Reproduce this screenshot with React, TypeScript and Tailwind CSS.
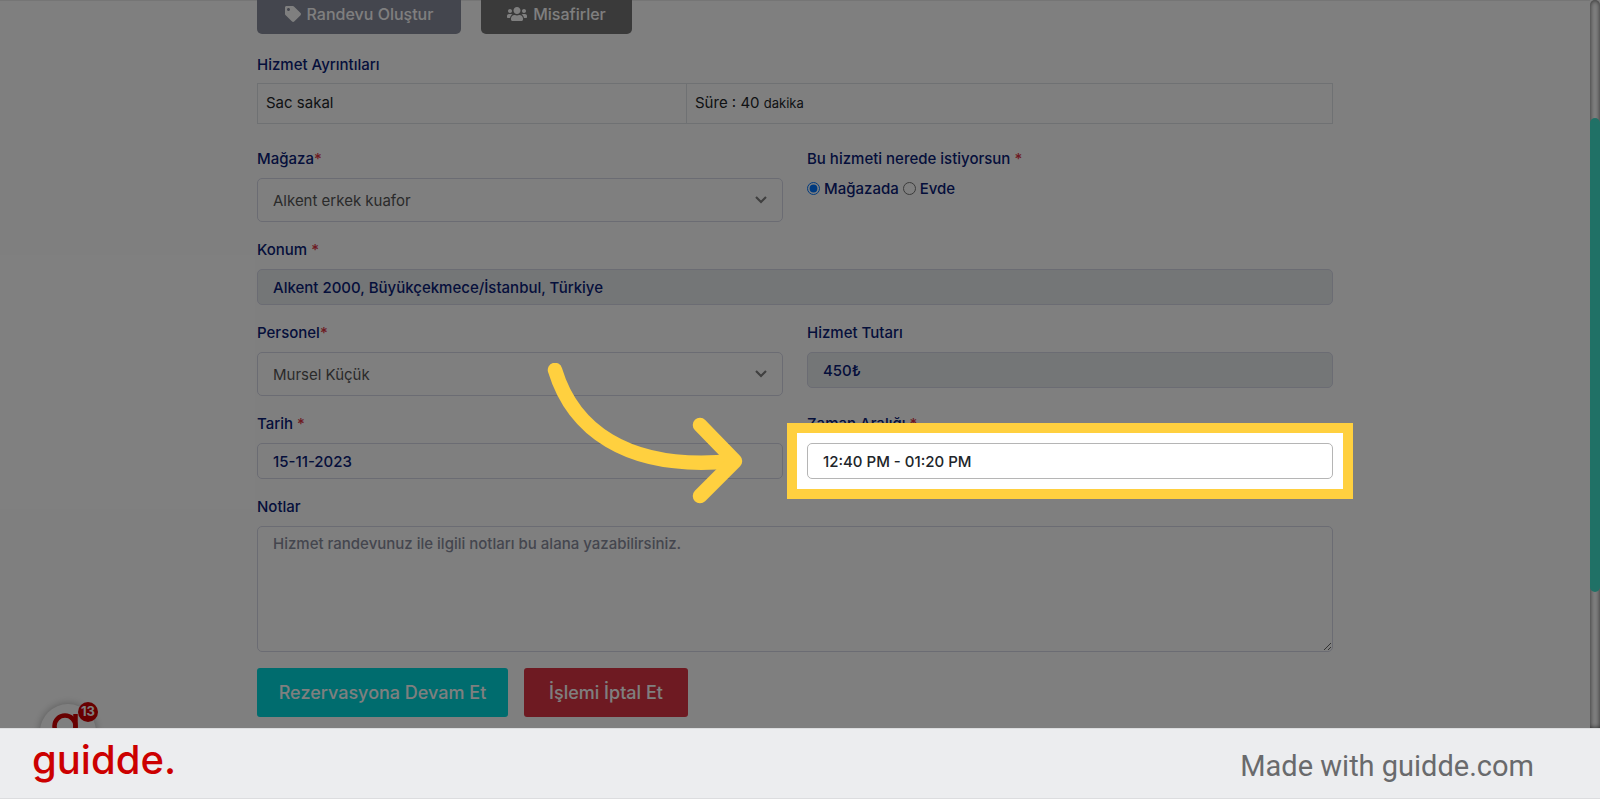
import type { ReactNode } from 'react';
import { FaTag, FaUsers } from 'react-icons/fa';

interface FieldProps {
  id: string;
  label: string;
  required?: boolean;
  children: ReactNode;
}

interface SelectProps {
  id: string;
  options: string[];
}

const inputClass =
  'block h-9 w-full rounded-[5px] border border-[#d6d8e7] px-[15px] text-[15px] font-medium text-[#0a2177] outline-none';

const Required = () => <span className="text-[#dc3545]">*</span>;

const ChevronIcon = () => (
  <svg
    className="pointer-events-none absolute top-1/2 right-4 h-2 w-3 -translate-y-1/2"
    viewBox="0 0 12 8"
    fill="none"
    stroke="#808080"
    strokeWidth={2.2}
  >
    <path d="M1 1l5 5 5-5" />
  </svg>
);

const PointerArrow = () => (
  <svg
    className="pointer-events-none absolute -top-20 right-full mr-16 h-[142px] w-[196px]"
    viewBox="0 0 196 142"
    fill="none"
    stroke="#ffd03f"
    strokeWidth={14.5}
    strokeLinecap="round"
    strokeLinejoin="round"
  >
    <path d="M8 7C25 63 76 109 186 98" />
    <path d="M153 62l35 36-35 35" />
  </svg>
);

/** Label with its control underneath */
function Field({ id, label, required, children }: FieldProps) {
  return (
    <div>
      <label htmlFor={id} className="mb-[9px] block text-[15px] leading-[21px] font-medium text-[#0a2177]">
        {label}
        {required && <Required />}
      </label>
      {children}
    </div>
  );
}

function Select({ id, options }: SelectProps) {
  return (
    <div className="relative">
      <select
        id={id}
        className="block h-11 w-full appearance-none rounded-[5px] border border-[#d6d8e7] bg-white px-[15px] pt-0.5 text-[15px] text-[#555555] outline-none"
      >
        {options.map((option) => (
          <option key={option}>{option}</option>
        ))}
      </select>
      <ChevronIcon />
    </div>
  );
}

function GuideWidget() {
  return (
    <div className="absolute -bottom-8 left-10 size-14 rounded-full bg-white shadow-[0_0_8px_rgba(0,0,0,0.3)]">
      <svg className="absolute top-2 left-3 h-10 w-7" viewBox="0 0 28 40" fill="none" stroke="#d00000" strokeWidth={4.5}>
        <circle cx="13" cy="14" r="10.5" />
        <line x1="23.5" y1="2" x2="23.5" y2="28" />
      </svg>
      <span className="absolute -top-0.5 -right-0.5 flex size-5 items-center justify-center rounded-full bg-[#d00000] text-[13px] font-bold text-white">
        13
      </span>
    </div>
  );
}

export default function App() {
  return (
    <div className="flex h-screen flex-col bg-white font-['Inter',sans-serif]">
      <div className="relative flex min-h-0 flex-1 overflow-hidden">
        <main className="min-w-0 flex-1 border-t border-[#ebebeb]">
          <form className="mx-auto w-full max-w-[1076px]">
            <div className="-mt-[7px] flex gap-5">
              <button
                type="button"
                className="flex h-10 w-51 items-center justify-center gap-1.5 rounded-[5px] bg-[#888c9c] text-base font-medium text-white"
              >
                <FaTag className="size-4" />
                Randevu Oluştur
              </button>
              <button
                type="button"
                className="flex h-10 w-[151px] items-center justify-center gap-1.5 rounded-[5px] bg-[#757575] text-base font-medium text-white"
              >
                <FaUsers className="size-5" />
                Misafirler
              </button>
            </div>

            <h2 className="mt-5 mb-2 text-[15px] leading-[21px] font-medium text-[#0a2177]">Hizmet Ayrıntıları</h2>
            <table className="w-full table-fixed border-collapse text-[15px] text-[#212529]">
              <tbody>
                <tr className="h-10">
                  <td className="w-[429px] border border-[#dee2e6] px-2">Sac sakal</td>
                  <td className="border border-[#dee2e6] px-2">
                    Süre : 40 <span className="text-[13px]">dakika</span>
                  </td>
                </tr>
              </tbody>
            </table>

            <div className="mt-6 grid grid-cols-2 gap-x-6 gap-y-[17px]">
              <Field id="store" label="Mağaza" required>
                <Select id="store" options={['Alkent erkek kuafor']} />
              </Field>

              <fieldset className="text-[15px] font-medium text-[#0a2177]">
                <legend className="mb-[9px] leading-[21px]">
                  Bu hizmeti nerede istiyorsun <Required />
                </legend>
                <div className="flex items-center gap-1 leading-[21px]">
                  <label className="flex items-center gap-1">
                    <input type="radio" name="place" defaultChecked className="size-[13px]" />
                    Mağazada
                  </label>
                  <label className="flex items-center gap-1">
                    <input type="radio" name="place" className="size-[13px]" />
                    Evde
                  </label>
                </div>
              </fieldset>

              <div className="col-span-2">
                <Field id="location" label="Konum " required>
                  <input
                    id="location"
                    readOnly
                    className={`${inputClass} bg-[#e9ecef]`}
                    defaultValue="Alkent 2000, Büyükçekmece/İstanbul, Türkiye"
                  />
                </Field>
              </div>

              <Field id="staff" label="Personel" required>
                <Select id="staff" options={['Mursel Küçük']} />
              </Field>
              <Field id="price" label="Hizmet Tutarı">
                <input id="price" readOnly className={`${inputClass} bg-[#e9ecef]`} defaultValue="450₺" />
              </Field>

              <Field id="date" label="Tarih " required>
                <input id="date" className={inputClass} defaultValue="15-11-2023" />
              </Field>
              <Field id="slot" label="Zaman Aralığı " required>
                {/* Highlighted step, sits above the dimmed page */}
                <div className="relative z-20">
                  <div className="absolute -inset-5 border-10 border-[#ffd03f] bg-white" />
                  <PointerArrow />
                  <input
                    id="slot"
                    className="relative block h-9 w-full rounded-[5px] border border-[#b5b5b5] px-[15px] text-[15px] font-medium text-[#212529] outline-none"
                    defaultValue="12:40 PM - 01:20 PM"
                  />
                </div>
              </Field>

              <div className="col-span-2">
                <Field id="notes" label="Notlar">
                  <textarea
                    id="notes"
                    className="block h-[126px] w-full resize rounded-[5px] border border-[#d6d8e7] px-[15px] py-1.5 text-[15px] font-medium outline-none placeholder:text-[#898c9d]"
                    placeholder="Hizmet randevunuz ile ilgili notları bu alana yazabilirsiniz."
                  />
                </Field>
              </div>
            </div>

            <div className="mt-4 flex gap-4">
              <button type="submit" className="h-[49px] w-[251px] rounded-[3px] bg-[#00d8dc] text-lg font-medium text-white">
                Rezervasyona Devam Et
              </button>
              <button type="button" className="h-[49px] w-[164px] rounded-[3px] bg-[#dc3545] text-lg font-medium text-white">
                İşlemi İptal Et
              </button>
            </div>
          </form>
        </main>

        {/* Scrollbar */}
        <div className="w-2.5 rounded-t-full pt-[118px] shadow-[inset_0_0_5px_#555555]">
          <div className="h-[474px] rounded-full bg-[#40e2cc]" />
        </div>

        <GuideWidget />
        <div className="pointer-events-none absolute inset-0 z-10 bg-black/50" />
      </div>

      <footer className="flex h-[71px] shrink-0 items-center justify-between border-y border-[#dcdddf] bg-[#ecedef] pr-[66px] pl-8">
        <span className="pb-2 text-[40px] leading-none font-medium text-[#cc0000]">guidde.</span>
        <span className="pt-1.5 font-['Roboto',sans-serif] text-[29px] leading-none text-[#696a6c]">
          Made with guidde.com
        </span>
      </footer>
    </div>
  );
}
